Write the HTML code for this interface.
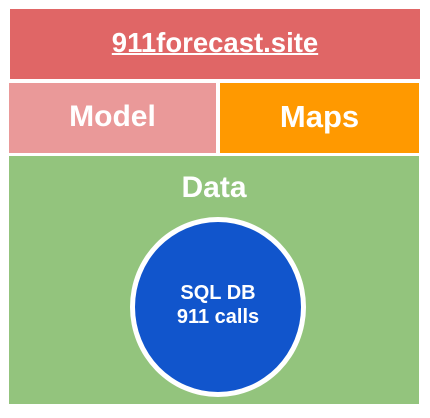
<!DOCTYPE html>
<html><head><style>
body{margin:0;width:430px;height:418px;background:#fff;position:relative;font-family:"Liberation Sans",Arial,sans-serif;font-weight:bold;color:#fff;overflow:hidden}
div{position:absolute;display:flex;align-items:center;justify-content:center}
</style></head><body>
<div style="left:10px;top:9px;width:410px;height:70px;background:#e06666;font-size:27.5px;text-decoration:underline;text-decoration-thickness:2px;padding-bottom:2px;box-sizing:border-box">911forecast.site</div>
<div style="left:9px;top:83px;width:207px;height:70px;background:#ea9999;font-size:30px;padding-bottom:2px;box-sizing:border-box">Model</div>
<div style="left:220px;top:83px;width:199px;height:70px;background:#ff9900;font-size:31px;padding-bottom:2px;box-sizing:border-box">Maps</div>
<div style="left:9px;top:156px;width:410px;height:248px;background:#93c47d;display:block">
<div style="left:0;top:14px;width:410px;height:36px;font-size:30px">Data</div>
<div style="left:121px;top:61px;width:166px;height:166px;border-radius:50%;background:#1155cc;border:5px solid #fff;flex-direction:column;font-size:20px;line-height:24px;padding-bottom:4px;box-sizing:content-box"><span>SQL DB</span><span>911 calls</span></div>
</div>
</body></html>
